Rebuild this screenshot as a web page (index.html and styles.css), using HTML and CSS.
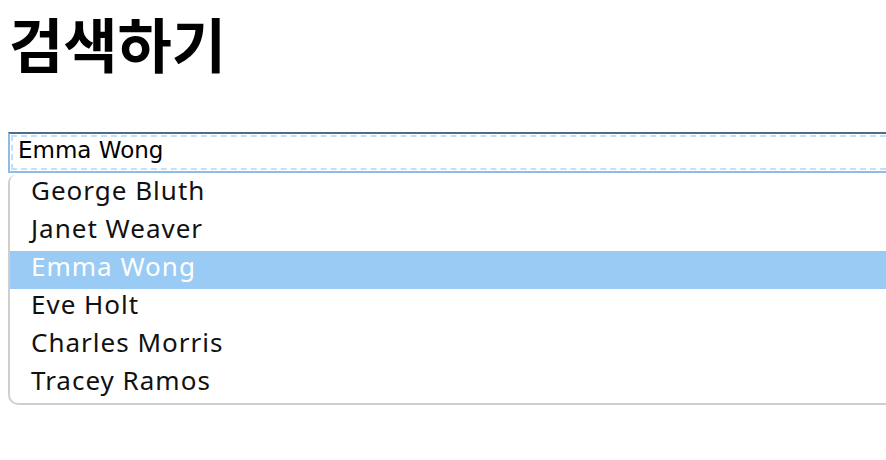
FILE: index.html
```html
<!DOCTYPE html>
<html lang="ko">
<head>
<meta charset="utf-8">
<link rel="stylesheet" href="styles.css">
</head>
<body>
<h1 class="title">검색하기</h1>
<div class="combo">
  <div class="field"><div class="field-inner">Emma Wong</div></div>
  <ul class="list">
    <li class="item">George Bluth</li>
    <li class="item">Janet Weaver</li>
    <li class="item selected">Emma Wong</li>
    <li class="item">Eve Holt</li>
    <li class="item">Charles Morris</li>
    <li class="item">Tracey Ramos</li>
  </ul>
</div>
</body>
</html>
```
FILE: styles.css
```css
html {
  background: #fff;
}
body {
  margin: 8px 0 8px 8px;
  background: #fff;
  font-family: "Noto Sans", "Noto Sans CJK KR", sans-serif;
}
.title {
  margin: -1px 0 0 1px;
  font-family: "Noto Sans CJK KR", sans-serif;
  font-weight: 700;
  font-size: 59px;
  line-height: 72px;
  color: #000;
}
.combo {
  margin-top: 53px;
}
.field {
  box-sizing: border-box;
  height: 41px;
  border: 2px solid #8fbbe8;
  border-top-color: #4f6d88;
  border-right: none;
  padding: 1px 0 1px 1px;
}
.field-inner {
  box-sizing: border-box;
  height: 35px;
  border: 2px dashed #c3e0fb;
  border-right: none;
  padding: 0 0 0 5px;
  font-family: "DejaVu Sans", sans-serif;
  font-size: 23px;
  line-height: 26px;
  color: #000;
}
.list {
  list-style: none;
  margin: 2px 0 0 0;
  padding: 0;
  border: 2px solid #cfcfcf;
  border-top: none;
  border-right: none;
  border-radius: 8px 0 0 10px;
}
.item {
  box-sizing: border-box;
  height: 38px;
  padding: 2px 0 0 21px;
  font-size: 26px;
  letter-spacing: 1px;
  line-height: 26px;
  color: #111;
}
.selected {
  background: #99cbf4;
  color: #fff;
}
```
